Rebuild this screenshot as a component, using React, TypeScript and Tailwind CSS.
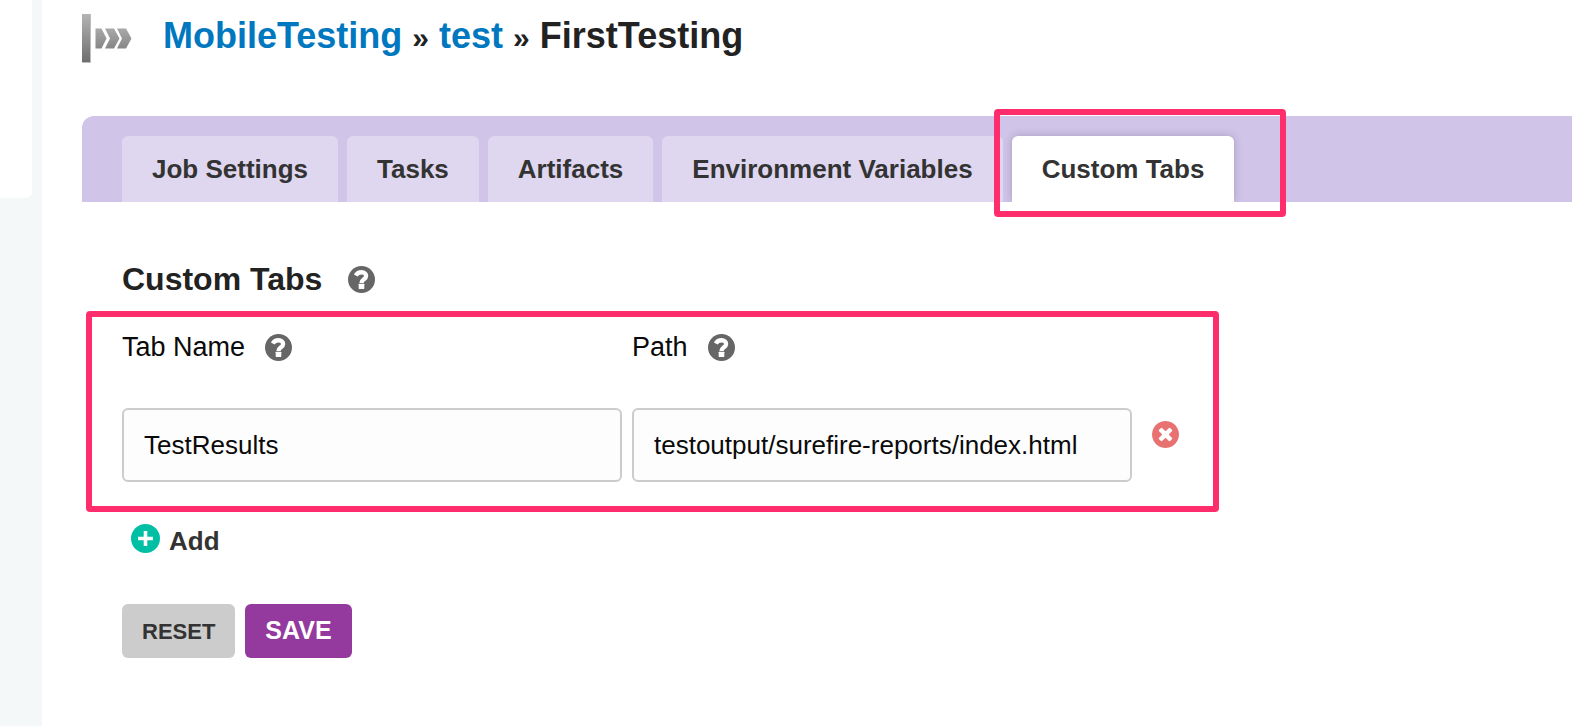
import { useState } from "react";

const TABS = ["Job Settings", "Tasks", "Artifacts", "Environment Variables", "Custom Tabs"];

function JobIcon() {
  return (
    <svg className="h-[50px] w-[51px] shrink-0" viewBox="0 0 51 50" aria-hidden="true">
      <defs>
        <linearGradient id="bar" x1="0" y1="0" x2="0" y2="1">
          <stop offset="0" stopColor="#b4b4b4" />
          <stop offset="1" stopColor="#6e6e6e" />
        </linearGradient>
        <linearGradient id="arrows" x1="0" y1="0" x2="0" y2="1">
          <stop offset="0" stopColor="#a9a9a9" />
          <stop offset="1" stopColor="#868686" />
        </linearGradient>
        <filter id="soft" x="-20%" y="-20%" width="140%" height="140%">
          <feGaussianBlur stdDeviation="0.7" />
        </filter>
      </defs>
      <rect x="0" y="0" width="9" height="49" fill="#bdbdbd" filter="url(#soft)" />
      <rect x="0" y="0" width="8" height="48" fill="url(#bar)" />
      <path
        d="M13.500 14.500h6l5 10-5 10h-6zM23 14.500h9l5.500 10-5.500 10h-9l5-10zM35 14.500h9l5.500 10-5.500 10h-9l5-10z"
        fill="url(#arrows)"
        filter="url(#soft)"
      />
    </svg>
  );
}

function HelpButton({ label }: { label: string }) {
  return (
    <button type="button" aria-label={label} className="block size-[27px] shrink-0 text-[#666]">
      <svg viewBox="0 0 82 82" className="block size-[27px]">
        <circle cx="41" cy="41" r="41" fill="currentColor" />
        <path
          d="M23.500 29C27.500 22 33 19 41 19c9 0 14 5 14 11 0 10.500-14 10-14 21.500"
          fill="none"
          stroke="#fff"
          strokeWidth="13"
        />
        <rect x="32.500" y="54" width="17" height="16" rx="1.500" fill="#fff" />
      </svg>
    </button>
  );
}

function Separator() {
  return (
    <>
      {" "}
      <span className="text-[30px]">»</span>{" "}
    </>
  );
}

function Field({
  id,
  label,
  value,
  onChange,
}: {
  id: string;
  label: string;
  value: string;
  onChange: (value: string) => void;
}) {
  return (
    <div className="min-w-0 flex-1">
      <div className="flex items-center gap-5">
        <label htmlFor={id} className="text-[27px] leading-[30px] text-[#0a0a0a]">
          {label}
        </label>
        <HelpButton label={`Help: ${label}`} />
      </div>
      <input
        id={id}
        type="text"
        value={value}
        onChange={(event) => onChange(event.target.value)}
        className="mt-[46px] block h-[74px] w-full rounded-md border-2 border-[#ccc] bg-[#fdfdfd] px-5 text-[26px] text-[#0a0a0a]"
      />
    </div>
  );
}

export default function App() {
  const [name, setName] = useState("TestResults");
  const [path, setPath] = useState("testoutput/surefire-reports/index.html");

  return (
    <div className="flex min-h-screen overflow-x-hidden bg-[#f4f8f9] font-['Liberation_Sans',Arial,sans-serif]">
      <aside className="w-[42px] shrink-0 pr-[10px]">
        <div className="h-[198px] rounded-br-md bg-white" />
      </aside>

      <main className="min-w-0 flex-1 bg-white pl-10">
        <header className="flex items-start gap-[30px] pt-[14px]">
          <JobIcon />
          <h1 className="text-4xl leading-[44px] font-bold whitespace-nowrap text-[#222]">
            <a href="#pipeline" className="text-[#0078bf]">MobileTesting</a>
            <Separator />
            <a href="#stage" className="text-[#0078bf]">test</a>
            <Separator />
            FirstTesting
          </h1>
        </header>

        <nav className="mt-[52px] flex gap-[9px] rounded-tl-xl bg-[#d0c4e8] pt-5 pl-10">
          {TABS.map((tab) =>
            tab === "Custom Tabs" ? (
              <div key={tab} className="relative">
                <div className="h-full [clip-path:inset(-10px_-10px_0_-10px)]">
                  <a
                    href="#custom-tabs"
                    aria-current="page"
                    className="block rounded-t-md bg-white px-[30px] text-[26px] leading-[66px] font-bold whitespace-nowrap text-[#333] shadow-[0_0_10px_rgba(0,0,0,0.2)]"
                  >
                    {tab}
                  </a>
                </div>
                <div className="pointer-events-none absolute -top-[27px] -right-[52px] -bottom-[15px] -left-[18px] rounded-sm border-6 border-[#ff2d6c]" />
              </div>
            ) : (
              <a
                key={tab}
                href={`#${tab.toLowerCase().replace(" ", "-")}`}
                className="rounded-t-md bg-[#dfd7ef] px-[30px] text-[26px] leading-[66px] font-bold whitespace-nowrap text-[#333]"
              >
                {tab}
              </a>
            ),
          )}
        </nav>

        <form className="pt-[58px] pl-10" onSubmit={(event) => event.preventDefault()}>
          <div className="flex items-center gap-[26px]">
            <h2 className="text-[32px] leading-[38px] font-bold text-[#222]">Custom Tabs</h2>
            <HelpButton label="Help: Custom Tabs" />
          </div>

          <div className="relative mt-[34px] flex max-w-[1057px] items-end gap-[10px]">
            <Field id="tab-name" label="Tab Name" value={name} onChange={setName} />
            <Field id="tab-path" label="Path" value={path} onChange={setPath} />
            <button
              type="button"
              aria-label="Remove tab"
              className="mb-[34px] ml-[10px] block size-[27px] shrink-0 text-[#e87272]"
            >
              <svg viewBox="0 128 1536 1536" fill="currentColor" className="block size-[27px]">
                <path d="M1149 1122q0-26-19-45l-181-181 181-181q19-19 19-45 0-27-19-46l-90-90q-19-19-46-19-26 0-45 19l-181 181-181-181q-19-19-45-19-27 0-46 19l-90 90q-19 19-19 46 0 26 19 45l181 181-181 181q-19 19-19 45 0 27 19 46l90 90q19 19 46 19 26 0 45-19l181-181 181 181q19 19 45 19 27 0 46-19l90-90q19-19 19-46zm387-226q0 209-103 385.500t-279.500 279.500-385.500 103-385.500-103-279.500-279.500-103-385.500 103-385.500 279.500-279.500 385.500-103 385.500 103 279.500 279.500 103 385.500z" />
              </svg>
            </button>
            <div className="pointer-events-none absolute -top-[21px] -right-10 -bottom-[30px] -left-9 rounded-sm border-6 border-[#ff2d6c]" />
          </div>

          <button
            type="button"
            className="mt-[42px] ml-[9px] flex items-start gap-[9px] text-[26px] leading-[34px] font-bold text-[#333]"
          >
            <svg viewBox="0 0 29 29" className="block size-[29px]" aria-hidden="true">
              <circle cx="14.5" cy="14.5" r="14.5" fill="#00bfa5" />
              <path d="M14.500 7v15M7 14.500h15" stroke="#fff" strokeWidth="3.600" />
            </svg>
            Add
          </button>

          <div className="mt-[46px] flex gap-[10px]">
            <button
              type="reset"
              className="h-[54px] rounded-md bg-[#ccc] px-5 text-[22px] font-bold text-[#333]"
            >
              RESET
            </button>
            <button
              type="submit"
              className="h-[54px] rounded-md bg-[#943a9e] px-5 text-[25px] font-bold text-white"
            >
              SAVE
            </button>
          </div>
        </form>
      </main>
    </div>
  );
}
